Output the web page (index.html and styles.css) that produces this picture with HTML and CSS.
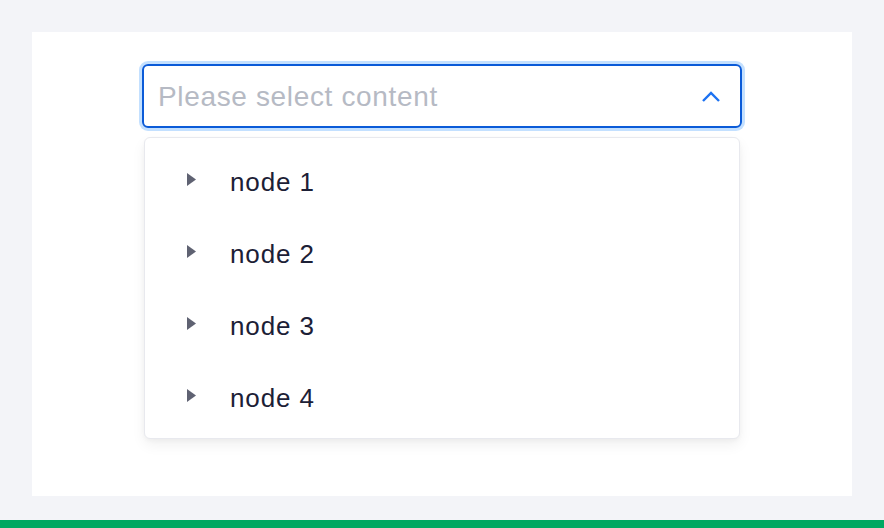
FILE: index.html
```html
<!DOCTYPE html>
<html>
<head>
<meta charset="utf-8">
<link rel="stylesheet" href="styles.css">
</head>
<body>
<main class="page">
  <section class="card">
    <div class="select">
      <span class="placeholder">Please select content</span>
      <svg class="chevron" width="20" height="12" viewBox="0 0 20 12"><path d="M2 10 L10 2 L18 10" fill="none" stroke="#1c72f2" stroke-width="2.4" stroke-linejoin="miter"/></svg>
    </div>
    <div class="dropdown">
      <div class="node"><svg class="tri" width="9" height="13" viewBox="0 0 9 13"><path d="M0 0 L9 6.5 L0 13 Z" fill="#5f6272"/></svg><span class="label">node 1</span></div>
      <div class="node"><svg class="tri" width="9" height="13" viewBox="0 0 9 13"><path d="M0 0 L9 6.5 L0 13 Z" fill="#5f6272"/></svg><span class="label">node 2</span></div>
      <div class="node"><svg class="tri" width="9" height="13" viewBox="0 0 9 13"><path d="M0 0 L9 6.5 L0 13 Z" fill="#5f6272"/></svg><span class="label">node 3</span></div>
      <div class="node"><svg class="tri" width="9" height="13" viewBox="0 0 9 13"><path d="M0 0 L9 6.5 L0 13 Z" fill="#5f6272"/></svg><span class="label">node 4</span></div>
    </div>
  </section>
</main>
<footer class="bar"></footer>
</body>
</html>
```

FILE: styles.css
```css
* { box-sizing: border-box; }
html, body { margin: 0; padding: 0; }
body {
  width: 884px;
  height: 528px;
  background: #f3f4f8;
  font-family: "Liberation Sans", Arial, sans-serif;
  display: flex;
  flex-direction: column;
  overflow: hidden;
}
.page {
  flex: 1;
  padding: 32px 32px 24px;
  display: flex;
}
.card {
  flex: 1;
  background: #ffffff;
  padding: 32px 110px 0;
  display: flex;
  flex-direction: column;
}
.select {
  height: 64px;
  border: 2px solid #0b5bd8;
  border-radius: 6px;
  box-shadow: 0 0 0 3px #c3e0ff;
  display: flex;
  align-items: center;
  padding: 0 20px 0 14px;
}
.placeholder {
  flex: 1;
  font-size: 28px;
  letter-spacing: 0.65px;
  color: #b6bac4;
  padding-top: 2px;
}
.chevron { display: block; margin-top: 1px; margin-right: -1px; }
.dropdown {
  margin: 9px 2px 0;
  height: 302px;
  border: 1px solid #e8e9ee;
  border-radius: 6px;
  background: #fff;
  box-shadow: 0 6px 14px 0 rgba(0, 0, 0, 0.06), 0 2px 4px rgba(0, 0, 0, 0.03);
  padding: 7px 0 5px;
  display: flex;
  flex-direction: column;
}
.node {
  height: 72px;
  display: flex;
  align-items: center;
  padding-left: 42px;
}
.tri { display: block; margin-top: -3px; }
.label {
  margin-left: 34px;
  font-size: 26px;
  letter-spacing: 0.9px;
  color: #1c2036;
  padding-top: 2px;
}
.bar {
  height: 8px;
  background: #00a862;
}
```
